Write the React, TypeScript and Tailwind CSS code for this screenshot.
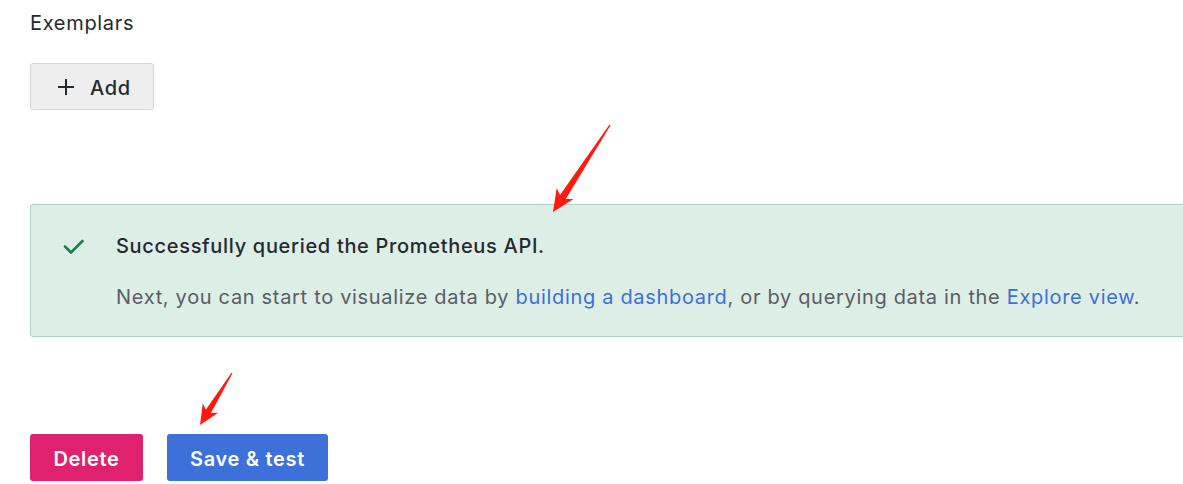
export default function App() {
  return (
    <div className="relative w-[1183px] h-[484px] overflow-hidden bg-white pl-[30px] font-['Inter',sans-serif] tracking-[0.68px]">
      <div className="pt-[11px] text-[20px] leading-[24px] text-[#24292e]">Exemplars</div>

      <button className="mt-[28px] flex h-[47px] w-[124px] items-center rounded-[3px] border border-[#d8d8d8] bg-[#eeeeee] pl-[26px] pt-[2px] text-[20px] font-medium text-[#24292e]">
        <svg width="18" height="18" viewBox="0 0 18 18" className="mr-[15px] -mt-[2px]">
          <path d="M9 1v16M1 9h16" stroke="#24292e" strokeWidth="2" />
        </svg>
        Add
      </button>

      {/* Health check result */}
      <div className="mt-[94px] flex h-[133px] w-[1190px] rounded-[3px] border border-[#a8d5c1] bg-[#ddeee7] pl-[31px] pt-[29px]">
        <svg width="24" height="24" viewBox="0 0 24 24" className="shrink-0">
          <path d="M3 12.5l6 6L20.5 7" fill="none" stroke="#1a7f4b" strokeWidth="2.6" strokeLinecap="round" strokeLinejoin="round" />
        </svg>
        <div className="ml-[30px]">
          <div className="text-[20px] leading-[25px] font-medium text-[#24292e]">Successfully queried the Prometheus API.</div>
          <p className="mt-[26px] text-[20px] leading-[25px] text-[#5a5d63]">
            Next, you can start to visualize data by <span className="text-[#3d6fd9]">building a dashboard</span>, or by querying data in the{' '}
            <span className="text-[#3d6fd9]">Explore view</span>.
          </p>
        </div>
      </div>

      <div className="mt-[97px] flex gap-[24px]">
        <button className="h-[47px] w-[113px] rounded-[3px] bg-[#e0226e] pt-[3px] text-[20px] font-semibold text-white">Delete</button>
        <button className="h-[47px] w-[161px] rounded-[3px] bg-[#3d71d9] pt-[3px] text-[20px] font-semibold text-white">Save &amp; test</button>
      </div>

      {/* annotation arrows */}
      <svg className="pointer-events-none absolute left-0 top-0" width="1183" height="484">
        <polygon fill="#ff1a0d" points="610.6,125.3 565.8,198.9 573.5,199.1 553,212 556.7,188.1 560,195.1 609.4,124.7" />
        <polygon fill="#ff1a0d" points="232.5,373.3 211,413 218.2,412.7 200,425 202.8,403.3 205.8,409.8 231.5,372.7" />
      </svg>
    </div>
  );
}
